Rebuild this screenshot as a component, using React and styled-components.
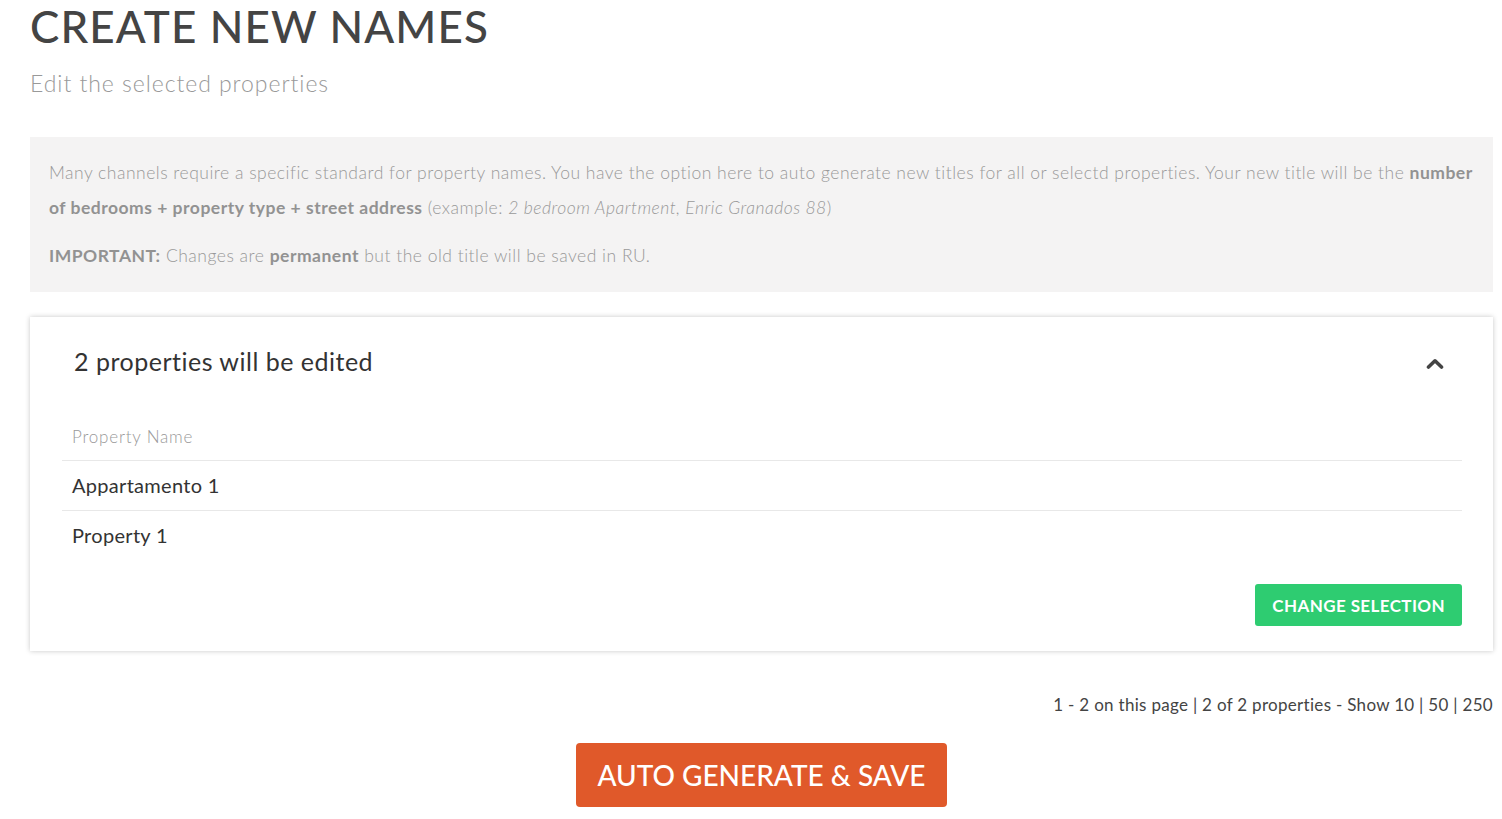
import React, { Component } from "react";
import styled, { createGlobalStyle } from "styled-components";

const GlobalStyle = createGlobalStyle`
  body {
    margin: 0;
    background: #fff;
    font-family: Lato, "Open Sans", sans-serif;
  }
`;

const properties = [
  { id: 1, name: "Appartamento 1" },
  { id: 2, name: "Property 1" },
];

const ChevronUp = () => (
  <svg width="18" height="11" viewBox="0 0 18 11">
    <polyline
      points="2.5,9 9,2.8 15.5,9"
      fill="none"
      stroke="#444"
      strokeWidth="3.6"
      strokeLinecap="round"
      strokeLinejoin="round"
    />
  </svg>
);

export default class App extends Component {
  state = {
    open: true,
  };
  toggle = () => {
    this.setState({ open: !this.state.open });
  };

  render() {
    return (
      <Page>
        <GlobalStyle />
        <Title>CREATE NEW NAMES</Title>
        <Subtitle>Edit the selected properties</Subtitle>
        <InfoBox>
          <InfoText>
            Many channels require a specific standard for property names. You
            have the option here to auto generate new titles for all or selectd
            properties. Your new title will be the{" "}
            <b>number of bedrooms + property type + street address</b>{" "}
            (example: <i>2 bedroom Apartment, Enric Granados 88</i>)
          </InfoText>
          <InfoText>
            <b>IMPORTANT:</b> Changes are <b>permanent</b> but the old title
            will be saved in RU.
          </InfoText>
        </InfoBox>
        <Card>
          <CardHeader>
            <CardTitle>2 properties will be edited</CardTitle>
            <Toggle onClick={this.toggle}>
              <ChevronUp />
            </Toggle>
          </CardHeader>
          {this.state.open && (
            <>
              <Table>
                <HeadCell>Property Name</HeadCell>
                {properties.map((p) => (
                  <Cell key={p.id}>{p.name}</Cell>
                ))}
              </Table>
              <CardFooter>
                <GreenButton>CHANGE SELECTION</GreenButton>
              </CardFooter>
            </>
          )}
        </Card>
        <Pager>
          1 - 2 on this page | 2 of 2 properties - Show 10 | 50 | 250
        </Pager>
        <Actions>
          <OrangeButton>AUTO GENERATE &amp; SAVE</OrangeButton>
        </Actions>
      </Page>
    );
  }
}

const Page = styled.div`
  padding: 0 9px 12px 30px;
  color: #444;
`;

const Title = styled.h1`
  margin: 0;
  font-size: 44px;
  line-height: 52px;
  font-weight: 500;
  color: #444;
  letter-spacing: 1.1px;
`;

const Subtitle = styled.div`
  margin-top: 14px;
  font-size: 23px;
  line-height: 34px;
  font-weight: 300;
  color: #999;
  letter-spacing: 0.95px;
`;

const InfoBox = styled.div`
  margin-top: 37px;
  background: #f4f3f3;
  padding: 18px 19px 19px 19px;
`;

const InfoText = styled.p`
  margin: 0 0 13px;
  font-size: 17.5px;
  line-height: 35px;
  font-weight: 300;
  color: #999;
  letter-spacing: 0.5px;
  &:last-child {
    margin-bottom: 0;
  }
  b {
    font-weight: 700;
    color: #929292;
  }
`;

const Card = styled.div`
  margin-top: 25px;
  background: #fff;
  box-shadow: 0 0 5px rgba(0, 0, 0, 0.22);
  padding: 0 31px 25px 32px;
`;

const CardHeader = styled.div`
  display: flex;
  align-items: center;
  justify-content: space-between;
  height: 87px;
  padding: 0 18px 0 12px;
`;

const CardTitle = styled.h3`
  margin: 0;
  font-size: 25px;
  font-weight: 400;
  color: #333;
  letter-spacing: 0.5px;
`;

const Toggle = styled.span`
  display: flex;
  cursor: pointer;
  margin-top: 5px;
`;

const Table = styled.div`
  display: grid;
  margin-top: 10px;
`;

const HeadCell = styled.div`
  padding: 0 10px;
  height: 46px;
  line-height: 46px;
  font-size: 17px;
  font-weight: 300;
  color: #999;
  letter-spacing: 0.8px;
  border-bottom: 1px solid #e8e8e8;
`;

const Cell = styled.div`
  padding: 0 10px;
  height: 49px;
  line-height: 49px;
  font-size: 20px;
  font-weight: 400;
  color: #333;
  letter-spacing: 0.3px;
  border-bottom: 1px solid #e8e8e8;
  &:last-child {
    border-bottom: none;
  }
`;

const CardFooter = styled.div`
  display: flex;
  justify-content: flex-end;
  margin-top: 24px;
`;

const GreenButton = styled.button`
  background: #2ecc71;
  color: #fff;
  border: none;
  border-radius: 3px;
  height: 42px;
  padding: 0 17px;
  font-family: Lato, sans-serif;
  font-size: 17px;
  font-weight: 700;
  letter-spacing: 0.4px;
  cursor: pointer;
`;

const Pager = styled.div`
  margin-top: 40px;
  text-align: right;
  font-size: 17px;
  line-height: 28px;
  color: #444;
  letter-spacing: 0.3px;
`;

const Actions = styled.div`
  display: flex;
  justify-content: center;
  margin-top: 24px;
`;

const OrangeButton = styled.button`
  background: #e0592a;
  color: #fff;
  border: none;
  border-radius: 4px;
  height: 64px;
  padding: 0 21px;
  font-family: Lato, sans-serif;
  font-size: 28px;
  font-weight: 500;
  cursor: pointer;
`;
